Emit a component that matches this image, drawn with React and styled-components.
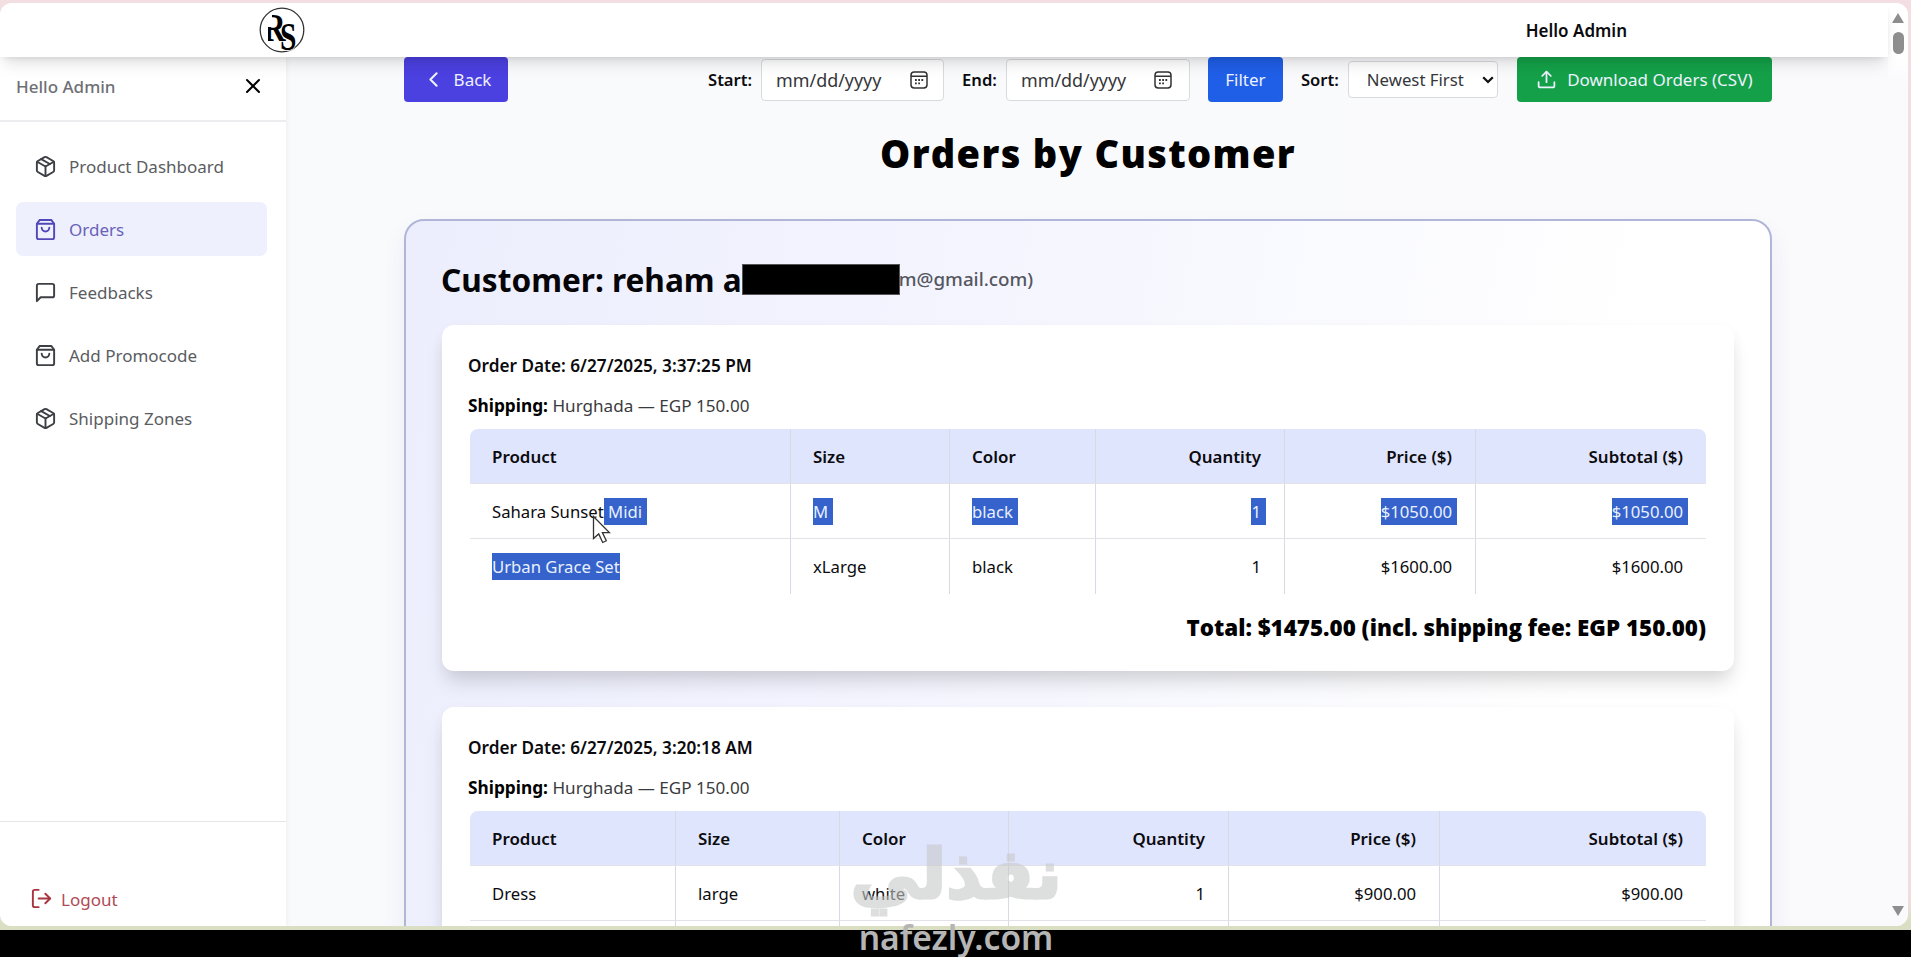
import React from "react";
import styled, { createGlobalStyle } from "styled-components";
import {
  FiChevronLeft,
  FiLogOut,
  FiMessageSquare,
  FiShoppingBag,
  FiUpload,
  FiX,
} from "react-icons/fi";
import { Package } from "lucide-react";

const GlobalStyle = createGlobalStyle`
  * {
    box-sizing: border-box;
  }
  body {
    margin: 0;
    background: #000;
    color: #0b0b0e;
    font-family: "Noto Sans", "Open Sans", sans-serif;
    font-size: 17px;
    overflow: hidden;
  }
`;

const Screen = styled.div`
  position: relative;
  height: 957px;
  background: #000;
  overflow: hidden;
`;

const Frame = styled.div`
  height: 930px;
  padding: 3px 3px 4px 0;
  background: linear-gradient(to bottom, #f3dfe1 0, #f0dedf 900px, #dadfc4 922px);
`;

const Browser = styled.div`
  display: flex;
  height: 100%;
  overflow: hidden;
  border-radius: 12px;
  background: #fafafd;
`;

const Page = styled.div`
  display: flex;
  flex: 1;
  flex-direction: column;
  min-width: 0;
`;

const ScrollBar = styled.div`
  display: flex;
  flex-direction: column;
  align-items: center;
  width: 20px;
  padding: 10px 3px 10px 3px;
  background: linear-gradient(to bottom, #fff 54px, #fafafd 80px);
`;

const Arrow = styled.div`
  width: 0;
  border: 6.5px solid transparent;
  border-top-width: ${(p) => (p.$down ? "10px" : "0")};
  border-bottom-width: ${(p) => (p.$down ? "0" : "10px")};
  border-${(p) => (p.$down ? "top" : "bottom")}-color: #8e8e8e;
`;

const Thumb = styled.div`
  width: 11px;
  height: 22px;
  margin: 9px 0 auto;
  border-radius: 6px;
  background: #8e8e8e;
`;

const Header = styled.header`
  position: relative;
  z-index: 2;
  display: flex;
  flex: none;
  align-items: center;
  justify-content: space-between;
  height: 54px;
  padding: 0 261px 0 259px;
  background: #fff;
  box-shadow: 0 10px 16px -4px rgba(0, 0, 0, 0.13), 0 3px 6px -3px rgba(0, 0, 0, 0.12);
  font-weight: 600;
`;

const Body = styled.div`
  display: flex;
  flex: 1;
  min-height: 0;
`;

const Sidebar = styled.aside`
  z-index: 1;
  display: flex;
  flex: none;
  flex-direction: column;
  width: 286px;
  background: #fff;
  box-shadow: 0 0 6px rgba(0, 0, 0, 0.07);
`;

const SidebarTop = styled.div`
  display: flex;
  align-items: center;
  justify-content: space-between;
  height: 65px;
  padding: 0 21px 5px 16px;
  border-bottom: 2px solid #ededef;
  color: #6e7075;
  font-weight: 500;

  svg {
    color: #000;
  }
`;

const Nav = styled.nav`
  display: flex;
  flex: 1;
  flex-direction: column;
  gap: 9px;
  padding: 17px 19px 0 16px;
`;

const NavItem = styled.div`
  display: flex;
  align-items: center;
  gap: 12px;
  height: 54px;
  padding-left: 18px;
  border-radius: 7px;
  background: ${(p) => (p.$active ? "#eef0fe" : "transparent")};
  color: ${(p) => (p.$active ? "#6a62b8" : "#5a5c61")};

  svg {
    color: ${(p) => (p.$active ? "#5148b8" : "#3c3f44")};
  }
`;

const SidebarFooter = styled.div`
  display: flex;
  align-items: flex-end;
  gap: 8px;
  height: 105px;
  padding: 0 0 15px 30px;
  border-top: 1px solid #e6e6e9;
  color: #b04a55;

  svg {
    margin-bottom: 1px;
    color: #a83440;
  }
`;

const Main = styled.main`
  flex: 1;
  min-width: 0;
  padding: 0 116px 0 118px;
  background: linear-gradient(to right, #f9fafc, #fafafd);
  overflow: hidden;
`;

const Toolbar = styled.div`
  display: flex;
  align-items: center;
  height: 45px;
`;

const Button = styled.button`
  display: flex;
  align-items: center;
  justify-content: center;
  gap: ${(p) => p.$gap || 0}px;
  width: ${(p) => p.$width}px;
  height: 45px;
  margin-left: ${(p) => p.$left || 0}px;
  padding: 0;
  border: 0;
  border-radius: 4px;
  background: ${(p) => p.$color};
  color: #eef1ff;
  font: inherit;
`;

const Label = styled.span`
  margin: 0 9px 0 ${(p) => p.$left}px;
  font-weight: 600;
  font-size: 16.6px;
`;

const Field = styled.div`
  display: flex;
  align-items: center;
  justify-content: space-between;
  width: ${(p) => p.$width}px;
  height: ${(p) => p.$height}px;
  padding: 0 ${(p) => p.$padRight}px 0 ${(p) => p.$padLeft}px;
  border: 1px solid #d9dade;
  border-radius: 4px;
  background: #fff;
  color: #35363a;
  font-size: ${(p) => p.$size}px;
`;

const Title = styled.h1`
  margin: 27px 0 42px;
  color: #000;
  font-family: "Open Sans", sans-serif;
  font-size: 38px;
  font-weight: 800;
  line-height: 48px;
  letter-spacing: 1.35px;
  text-align: center;
`;

const CustomerCard = styled.section`
  height: 900px;
  padding: 36px;
  border: 2px solid #b1b5d8;
  border-radius: 20px;
  background: linear-gradient(100deg, #eceefd 0%, #f3f4fe 35%, #fff 82%);
  box-shadow: 0 12px 24px rgba(60, 60, 120, 0.07);
`;

const CustomerName = styled.h2`
  display: flex;
  align-items: center;
  height: 44px;
  margin: 0 0 24px -1px;
  color: #050508;
  font-size: 31.6px;
  font-weight: 700;
  white-space: pre;
`;

const Redacted = styled.span`
  width: 158px;
  height: 31px;
  border: 1px solid #555;
  background: #000;
`;

const Email = styled.span`
  margin-left: -1px;
  color: #55565f;
  font-size: 18.8px;
  font-weight: 500;
`;

const OrderCard = styled.article`
  height: 346px;
  margin-bottom: 36px;
  padding: 27px 27px 0;
  border-radius: 12px;
  background: #fff;
  box-shadow: 0 14px 20px -4px rgba(0, 0, 0, 0.15), 0 3px 14px rgba(0, 0, 0, 0.03);
`;

const OrderDate = styled.div`
  height: 28px;
  margin: 0 0 12px -1px;
  font-size: 17.2px;
  font-weight: 600;
  line-height: 28px;
`;

const Shipping = styled.div`
  height: 28px;
  margin: 0 0 9px -1px;
  color: #3a3b40;
  font-size: 17.1px;
  line-height: 28px;

  strong {
    color: #000;
    font-size: 17.3px;
  }
`;

const Table = styled.div`
  margin: 0 1px;
`;

const Row = styled.div`
  display: grid;
  grid-template-columns: ${(p) => p.$columns};
  height: 55px;
  border-bottom: ${(p) => (p.$last ? "0" : "1px solid #e2e2e8")};
`;

const Cell = styled.div`
  display: flex;
  align-items: center;
  justify-content: ${(p) => (p.$right ? "flex-end" : "flex-start")};
  padding: 0 23px 0 22px;
  border-right: 1px solid #d8d9e2;
  font-size: 16.7px;
  white-space: pre;

  &:last-child {
    border-right: 0;
  }
`;

const HeadRow = styled(Row)`
  border-radius: 8px 8px 0 0;
  background: #e0e5fe;
  font-weight: 600;

  ${Cell} {
    font-size: 16.9px;
  }
`;

/* the selection runs past the last glyph without moving the text */
const Selected = styled.span`
  height: 27px;
  margin-right: ${(p) => (p.$tail ? "-5px" : "0")};
  padding-right: ${(p) => (p.$tail ? "5px" : "0")};
  background: #3562cb;
  color: #e9f1ff;
  line-height: 27px;
`;

const Total = styled.div`
  margin: 18px 1px 0 0;
  color: #000;
  font-family: "Open Sans", sans-serif;
  font-size: 22.4px;
  font-weight: 800;
  line-height: 32px;
  text-align: right;
`;

const Cursor = styled.svg`
  position: absolute;
  left: 592px;
  top: 515px;
`;

const Watermark = styled.div`
  position: absolute;
  left: 836px;
  top: 829px;
  width: 240px;
  text-align: center;
`;

const WatermarkArabic = styled.div`
  height: 90px;
  color: #c8cac9;
  font: 700 69px/90px "DejaVu Sans", sans-serif;
  -webkit-text-stroke: 3px #c8cac9;
  opacity: 0.6;
`;

const WatermarkLatin = styled.div`
  margin-top: -5px;
  color: #b5b5b5;
  font-size: 33.6px;
  font-weight: 600;
  line-height: 46px;
`;

const Logo = () => (
  <svg width="46" height="46" viewBox="0 0 46 46">
    <clipPath id="stem">
      <path d="M9 20h4V4h30v40H9z" />
    </clipPath>
    <circle cx="23" cy="23" r="21.8" fill="none" stroke="#333" strokeWidth="1.3" />
    <g fontFamily="Liberation Serif, serif" fontWeight="700" fill="#000">
      <g clipPath="url(#stem)">
        <text transform="translate(4 34) scale(0.78 1)" fontSize="40">R</text>
      </g>
      <text
        transform="translate(21 43) scale(0.72 1)"
        fontSize="41"
        stroke="#fff"
        strokeWidth="1.4"
        paintOrder="stroke"
      >
        S
      </text>
    </g>
  </svg>
);

const CalendarIcon = () => (
  <svg width="18" height="18" viewBox="0 0 18 18" fill="none" stroke="#333" strokeWidth="1.5">
    <rect x="1" y="1" width="16" height="16" rx="3.2" />
    <path d="M1 5.2h16" />
    <path d="M5 12.4h1.8M8.2 12.4H10M5 9h1.8M8.2 9H10M11.4 9h1.8" strokeWidth="1.9" />
  </svg>
);

const ChevronDown = () => (
  <svg width="12" height="8" viewBox="0 0 12 8" fill="none" stroke="#111" strokeWidth="2.3">
    <path d="M1.2 1.3 6 6l4.8-4.7" />
  </svg>
);

const navItems = [
  { label: "Product Dashboard", Icon: Package },
  { label: "Orders", Icon: FiShoppingBag, active: true },
  { label: "Feedbacks", Icon: FiMessageSquare },
  { label: "Add Promocode", Icon: FiShoppingBag },
  { label: "Shipping Zones", Icon: Package },
];

const headings = ["Product", "Size", "Color", "Quantity", "Price ($)", "Subtotal ($)"];

const orders = [
  {
    date: "6/27/2025, 3:37:25 PM",
    columns: "321px 159px 146px 189px 191px 1fr",
    rows: [
      [
        { text: "Sahara Sunset", selected: " Midi", tail: true },
        { selected: "M", tail: true },
        { selected: "black", tail: true },
        { selected: "1", tail: true },
        { selected: "$1050.00", tail: true },
        { selected: "$1050.00", tail: true },
      ],
      [
        { selected: "Urban Grace Set" },
        { text: "xLarge" },
        { text: "black" },
        { text: "1" },
        { text: "$1600.00" },
        { text: "$1600.00" },
      ],
    ],
    total: "Total: $1475.00 (incl. shipping fee: EGP 150.00)",
  },
  {
    date: "6/27/2025, 3:20:18 AM",
    columns: "206px 164px 169px 220px 211px 1fr",
    rows: [
      [
        { text: "Dress" },
        { text: "large" },
        { text: "white" },
        { text: "1" },
        { text: "$900.00" },
        { text: "$900.00" },
      ],
      [{}, {}, {}, {}, {}, {}],
    ],
  },
];

const DateField = ({ width, padRight }) => (
  <Field $width={width} $height={42} $padLeft={14} $padRight={padRight} $size={17.9}>
    mm/dd/yyyy
    <CalendarIcon />
  </Field>
);

const Order = ({ order }) => (
  <OrderCard>
    <OrderDate>Order Date: {order.date}</OrderDate>
    <Shipping>
      <strong>Shipping:</strong> Hurghada — EGP 150.00
    </Shipping>
    <Table>
      <HeadRow $columns={order.columns}>
        {headings.map((heading, i) => (
          <Cell key={heading} $right={i > 2}>
            {heading}
          </Cell>
        ))}
      </HeadRow>
      {order.rows.map((row, r) => (
        <Row key={r} $columns={order.columns} $last={r === order.rows.length - 1}>
          {row.map((cell, i) => (
            <Cell key={i} $right={i > 2}>
              {cell.text}
              {cell.selected && <Selected $tail={cell.tail}>{cell.selected}</Selected>}
            </Cell>
          ))}
        </Row>
      ))}
    </Table>
    {order.total && <Total>{order.total}</Total>}
  </OrderCard>
);

const App = () => {
  return (
    <Screen>
      <GlobalStyle />
      <Frame>
        <Browser>
          <Page>
            <Header>
              <Logo />
              <span>Hello Admin</span>
            </Header>
            <Body>
              <Sidebar>
                <SidebarTop>
                  Hello Admin
                  <FiX size={24} />
                </SidebarTop>
                <Nav>
                  {navItems.map(({ label, Icon, active }) => (
                    <NavItem key={label} $active={active}>
                      <Icon size={23} />
                      {label}
                    </NavItem>
                  ))}
                </Nav>
                <SidebarFooter>
                  <FiLogOut size={23} />
                  Logout
                </SidebarFooter>
              </Sidebar>
              <Main>
                <Toolbar>
                  <Button $color="#4b40e0" $width={104} $gap={8}>
                    <FiChevronLeft size={25} />
                    Back
                  </Button>
                  <Label $left={200}>Start:</Label>
                  <DateField width={183} padRight={15} />
                  <Label $left={18}>End:</Label>
                  <DateField width={184} padRight={17} />
                  <Button $color="#1f5ee6" $width={75} $left={18}>
                    Filter
                  </Button>
                  <Label $left={18}>Sort:</Label>
                  <Field $width={150} $height={37} $padLeft={18} $padRight={3} $size={16.8}>
                    Newest First
                    <ChevronDown />
                  </Field>
                  <Button $color="#14a048" $width={255} $gap={10} $left={19}>
                    <FiUpload size={21} />
                    Download Orders (CSV)
                  </Button>
                </Toolbar>
                <Title>Orders by Customer</Title>
                <CustomerCard>
                  <CustomerName>
                    Customer: reham a
                    <Redacted />
                    <Email>m@gmail.com)</Email>
                  </CustomerName>
                  {orders.map((order) => (
                    <Order key={order.date} order={order} />
                  ))}
                </CustomerCard>
              </Main>
            </Body>
          </Page>
          <ScrollBar>
            <Arrow />
            <Thumb />
            <Arrow $down />
          </ScrollBar>
        </Browser>
      </Frame>
      <Cursor width="20" height="30" viewBox="0 0 20 30" fill="#fff" stroke="#333" strokeWidth="1.3">
        <path d="M1.5 1.5v22l5.2-4.6 4 8.6 3.6-1.7-3.9-8.2h7z" />
      </Cursor>
      <Watermark>
        <WatermarkArabic lang="ar" dir="rtl">نفذلي</WatermarkArabic>
        <WatermarkLatin>nafezly.com</WatermarkLatin>
      </Watermark>
    </Screen>
  );
};

export default App;
